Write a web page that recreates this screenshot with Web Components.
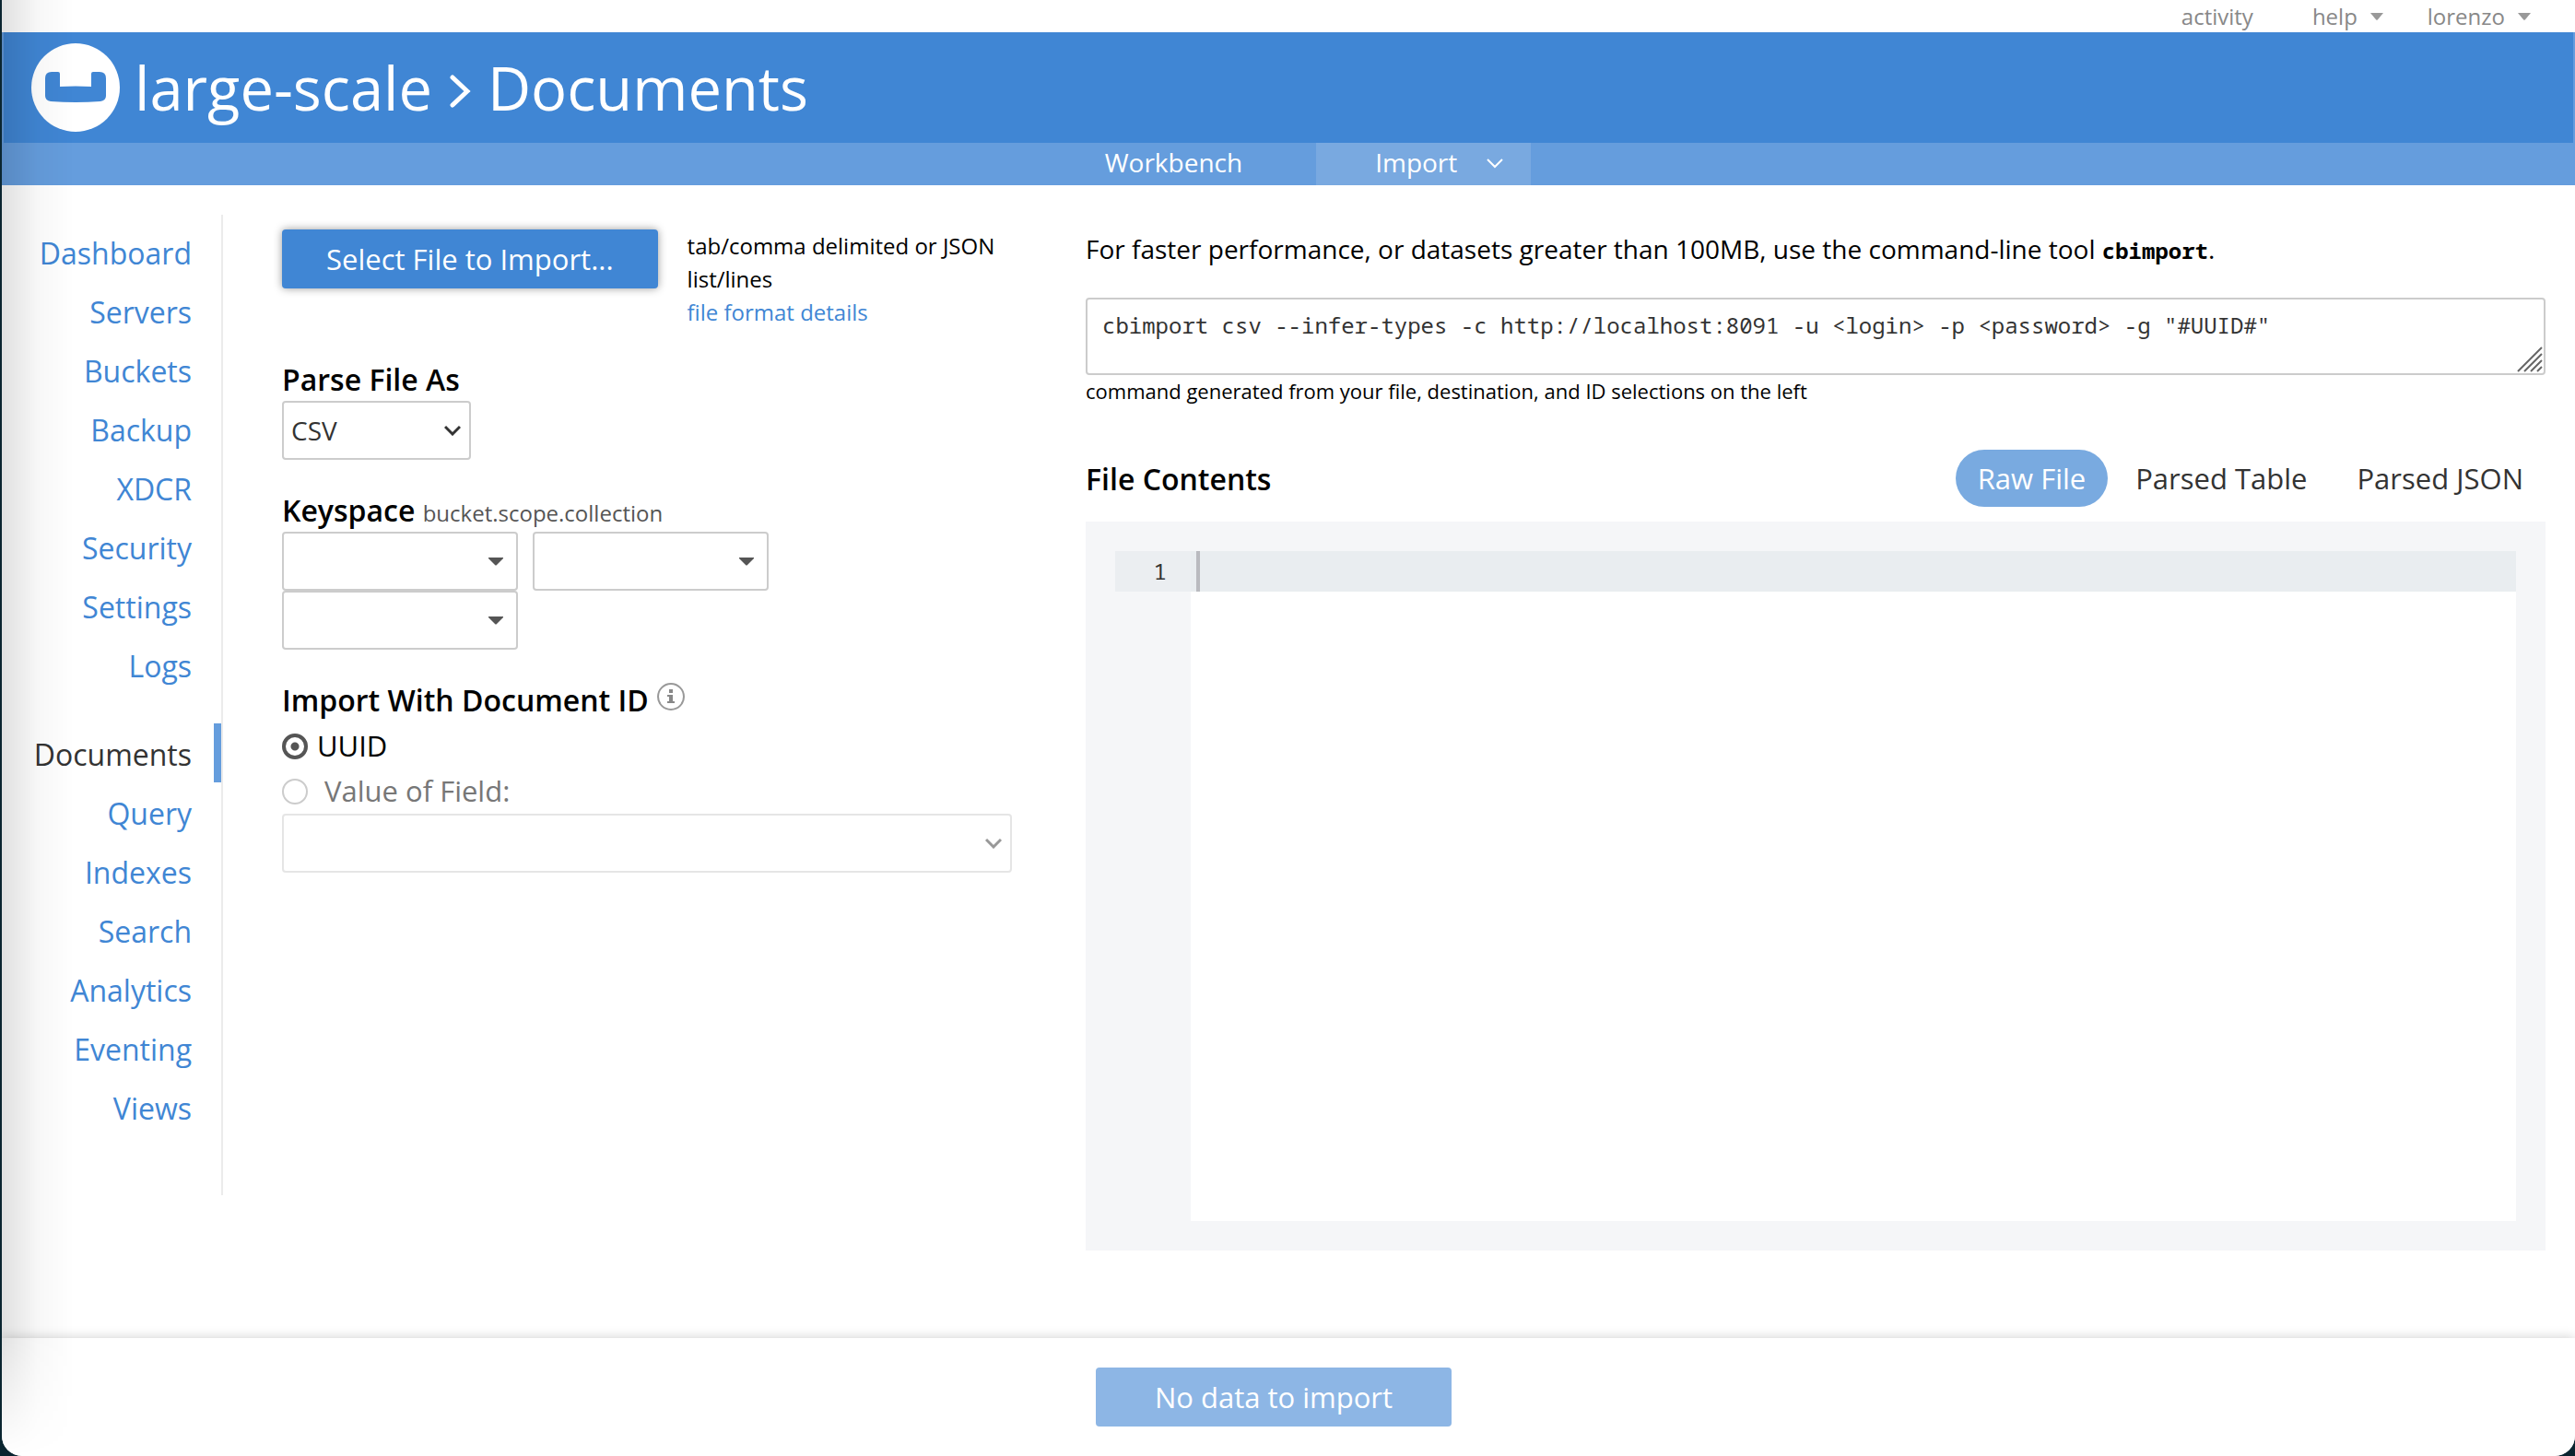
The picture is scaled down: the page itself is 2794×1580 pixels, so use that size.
<!DOCTYPE html>
<html lang="en">
<head>
<meta charset="utf-8">
<title>large-scale &gt; Documents</title>
<style>
html { height: 100%; background: #0a2530; }
body { margin: 0; min-height: 100%; display: flex; font-family: "Open Sans", "Noto Sans", sans-serif; font-size: 32px; color: #000; --mono: "Noto Sans Mono", "DejaVu Sans Mono", monospace; }
</style>
</head>
<body>
<cb-app></cb-app>
<script>
const define = (name, html, setup) => customElements.define(name, class extends HTMLElement {
  constructor() {
    super();
    this.attachShadow({ mode: "open" }).innerHTML = html;
  }
  connectedCallback() { if (setup) setup(this, this.shadowRoot); }
});

define("cb-topbar", `
<style>
:host { display: block; }
nav { display: flex; justify-content: flex-end; align-items: center; gap: 48px; height: 35px; padding-right: 48px; font-size: 24px; line-height: 34px; }
a { color: #888; text-decoration: none; display: flex; align-items: center; gap: 14px; }
a:first-child { margin-right: 16px; }
svg { width: 14px; height: 8px; fill: #999; }
</style>
<nav aria-label="Account">
<a href="#activity">activity</a>
<a href="#help">help<svg viewBox="0 0 14 8"><path d="M0 0h14L8 7.300Q7 8.300 6 7.300z"/></svg></a>
<a href="#user">lorenzo<svg viewBox="0 0 14 8"><path d="M0 0h14L8 7.300Q7 8.300 6 7.300z"/></svg></a>
</nav>`);

define("cb-header", `
<style>
:host { display: block; color: #fff; }
header { display: flex; align-items: center; gap: 16px; height: 120px; padding-left: 30px; background: #4086d4; border: solid #659ddd; border-width: 0 2px; }
.logo { width: 96px; height: 96px; display: block; }
h1 { margin: 0; font-size: 65px; font-weight: 400; line-height: 88px; display: flex; align-items: center; gap: 18px; }
h1 svg { width: 24px; height: 40px; margin-top: 8px; }
nav { display: flex; justify-content: center; gap: 16px; height: 46px; background: #659ddd; font-size: 28px; line-height: 42px; }
a { color: #fff; text-decoration: none; padding: 0 64px; display: flex; }
a.on { background: #79a9e0; padding-right: 30px; gap: 32px; }
a.on svg { width: 18px; height: 12px; margin-top: 16px; }
</style>
<header>
<svg class="logo" viewBox="0 0 96 96"><circle cx="48" cy="48" r="48" fill="#fff"/><path fill="#4086d4" d="M15 38Q15 31 22 31H29Q31 31 31 33V47Q48 46 65 47V33Q65 31 67 31H74Q81 31 81 38V57Q81 62 75 63Q48 65 21 63Q15 62 15 57z"/></svg>
<h1><span>large-scale</span><svg viewBox="0 0 24 40" fill="none" stroke="#fff" stroke-width="5" stroke-linecap="round"><path d="M4 5 20 20 4 35"/></svg><span>Documents</span></h1>
</header>
<nav aria-label="Documents">
<a href="#workbench">Workbench</a>
<a class="on" href="#import">Import<svg viewBox="0 0 18 12" fill="none" stroke="#fff" stroke-width="2"><path d="M1 2 9 10 17 2"/></svg></a>
</nav>`);

define("cb-sidebar", `
<style>
:host { display: block; width: 240px; border-right: 2px solid #ebebeb; box-sizing: border-box; }
nav { padding: 8px 0 64px; display: flex; flex-direction: column; }
a { color: #4086d4; text-decoration: none; line-height: 60px; text-align: right; padding: 4px 24px 0 0; border-right: 8px solid transparent; }
a.on { color: #333; border-right-color: #659ddd; margin-top: 32px; }
</style>
<nav aria-label="Main"></nav>`, (el, root) => {
  const nav = root.querySelector("nav");
  for (const name of el.getAttribute("items").split(" ")) {
    const a = document.createElement("a");
    a.href = "#" + name.toLowerCase();
    a.textContent = name;
    if (name === el.getAttribute("active")) { a.className = "on"; a.setAttribute("aria-current", "page"); }
    nav.append(a);
  }
});

define("cb-select", `
<style>
:host { display: block; width: 256px; }
.box { display: grid; align-items: center; }
.box > * { grid-area: 1 / 1; }
select { appearance: none; width: 100%; height: 64px; margin: 0; padding: 0 8px; box-sizing: border-box; border: 2px solid #ccc; border-radius: 4px; background: #fff; font: 28px "Open Sans", sans-serif; color: #333; opacity: 1; }
svg { justify-self: end; margin-right: 11px; width: 18px; height: 12px; pointer-events: none; }
.fill { display: none; margin-right: 15px; }
:host([kind=menu]) .fill { display: block; }
:host([kind=menu]) .line { display: none; }
:host([disabled]) .box { opacity: .5; }
</style>
<div class="box"><select></select>
<svg class="line" viewBox="0 0 18 12" fill="none" stroke="#333" stroke-width="3"><path d="M1 2 9 10 17 2"/></svg>
<svg class="fill" viewBox="0 0 18 12" fill="#555"><path d="M1 2H17V3L10 10Q9 11 8 10L1 3z"/></svg></div>`, (el, root) => {
  const s = root.querySelector("select");
  s.setAttribute("aria-label", el.getAttribute("label"));
  s.disabled = el.hasAttribute("disabled");
  s.add(new Option(el.getAttribute("value") || ""));
});

define("cb-import-form", `
<style>
:host { display: block; }
.file { display: flex; gap: 32px; align-items: flex-start; }
button { height: 64px; margin-top: 16px; padding: 0 48px; border: 0; border-radius: 4px; background: #4086d4; color: #fff; font: inherit; font-size: 31px; box-shadow: 0 0 10px rgba(0,0,0,.4); white-space: nowrap; }
.file p { margin: 16px 0 0; font-size: 24px; line-height: 36px; width: 360px; }
a { color: #4086d4; text-decoration: none; }
h2 { margin: 0; font-size: 32px; font-weight: 600; line-height: 46px; }
h2 small { font-size: 24px; line-height: 24px; font-weight: 400; color: #555; }
section { margin-top: 32px; }
.parse { width: 205px; }
.keys { display: flex; flex-wrap: wrap; column-gap: 16px; width: 600px; }
h2 svg { width: 32px; height: 32px; margin-left: 8px; }
.ids { margin-top: 2px; font-size: 31px; }
label { display: flex; align-items: center; line-height: 49px; gap: 10px; }
label.off { color: #777; gap: 18px; }
input { appearance: none; margin: 0; width: 28px; height: 28px; box-sizing: border-box; border: 4px solid #555; border-radius: 50%; background: radial-gradient(circle, #555 4px, #fff 5px); }
.off input { border: 2px solid #ccc; background: #fff; }
.field { width: 100%; }
</style>
<div class="file"><button type="button">Select File to Import...</button>
<p>tab/comma delimited or JSON list/lines<br><a href="#formats">file format details</a></p></div>
<section><h2>Parse File As</h2><cb-select class="parse" label="Parse File As" value="CSV"></cb-select></section>
<section><h2>Keyspace <small>bucket.scope.collection</small></h2>
<div class="keys"><cb-select kind="menu" label="Bucket"></cb-select><cb-select kind="menu" label="Scope"></cb-select><cb-select kind="menu" label="Collection"></cb-select></div></section>
<section><h2>Import With Document ID<svg viewBox="0 0 32 32"><circle cx="16" cy="16" r="14" fill="none" stroke="#999" stroke-width="2"/><path fill="#888" d="M14 8h4v4h-4zM12 14h6v7h2v2h-8v-2h2v-5h-2z"/></svg></h2>
<div class="ids"><label><input type="radio" name="id" checked>UUID</label>
<label class="off"><input type="radio" name="id" disabled>Value of Field:</label></div>
<cb-select class="field" label="Field" disabled></cb-select></section>`);

define("cb-command", `
<style>
:host { display: block; }
p { margin: 0; font-size: 28px; line-height: 46px; }
b { font: bold 24px/24px var(--mono); }
textarea { display: block; width: 100%; height: 84px; box-sizing: border-box; margin: 0; padding: 10px 16px; border: 2px solid #ccc; border-radius: 4px; font: 24px/36px var(--mono); color: #333; resize: none; overflow: hidden; }
.area { display: grid; margin-top: 30px; }
.area > * { grid-area: 1 / 1; }
svg { place-self: end; width: 28px; height: 28px; margin: 0 3px 3px 0; }
small { display: block; font-size: 22px; line-height: 34px; }
</style>
<p><label for="cmd">For faster performance, or datasets greater than 100MB, use the command-line tool <b>cbimport</b>.</label></p>
<div class="area"><textarea id="cmd" readonly></textarea>
<svg viewBox="0 0 28 28" stroke="#666" stroke-width="2"><path d="M1 27 27 1M8 27 27 8M15 27 27 15M22 27 27 22"/></svg></div>
<small>command generated from your file, destination, and ID selections on the left</small>`, (el, root) => {
  root.querySelector("textarea").value = 'cbimport csv --infer-types -c http://localhost:8091 -u <login> -p <password> -g "#UUID#"';
});

define("cb-file-view", `
<style>
:host { display: flex; flex-direction: column; }
.head { display: flex; justify-content: space-between; align-items: center; height: 62px; }
h2 { margin: 0; font-size: 32px; font-weight: 600; }
.tabs { display: flex; gap: 6px; }
button { height: 62px; border: 0; border-radius: 31px; background: none; padding: 0 24px; font: inherit; font-size: 31px; color: #333; }
button[aria-selected=true] { background: #79aae0; color: #fff; }
.panel { flex: 1; margin-top: 16px; padding: 32px; background: #f5f6f8; display: flex; }
.gutter { width: 82px; font: 24px/44px var(--mono); color: #333; }
.gutter div { background: #ebeef1; text-align: right; padding-right: 26px; }
.code { flex: 1; background: #fff; }
.row { height: 44px; background: #e9edf0; padding-left: 6px; }
.row i { display: block; width: 4px; height: 44px; background: #b9babf; }
</style>
<div class="head"><h2>File Contents</h2>
<div class="tabs" role="tablist"><button role="tab" aria-selected="true">Raw File</button><button role="tab">Parsed Table</button><button role="tab">Parsed JSON</button></div></div>
<div class="panel"><div class="gutter"><div>1</div></div><div class="code"><div class="row"><i></i></div></div></div>`);

define("cb-footer", `
<style>
:host { display: flex; justify-content: center; padding: 32px 32px 32px 0; background: #fff; box-shadow: 0 0 12px rgba(0,0,0,.2); }
button { height: 64px; padding: 0 64px; border: 0; border-radius: 4px; background: #8db6e5; color: #fff; font: inherit; font-size: 31px; }
</style>
<button type="button" disabled>No data to import</button>`);

define("cb-app", `
<style>
:host { flex: 1; display: flex; flex-direction: column; position: relative; margin-left: 2px; background: #fff; border-radius: 0 0 22px 22px; overflow: hidden; }
:host::after { content: ""; position: absolute; left: 0; top: 0; bottom: 0; width: 78px; pointer-events: none; background: linear-gradient(to right, rgba(0,0,0,.12), rgba(0,0,0,.03) 50%, transparent); -webkit-mask: linear-gradient(to top, transparent, #000 130px); mask: linear-gradient(to top, transparent, #000 130px); }
main { flex: 1; display: flex; padding: 32px 32px 95px 0; }
cb-sidebar { align-self: flex-start; }
cb-import-form { width: 792px; margin-left: 64px; }
.right { flex: 1; margin-left: 80px; padding-top: 14px; display: flex; flex-direction: column; }
cb-file-view { flex: 1; margin-top: 47px; }
</style>
<cb-topbar></cb-topbar>
<cb-header></cb-header>
<main>
<cb-sidebar active="Documents" items="Dashboard Servers Buckets Backup XDCR Security Settings Logs Documents Query Indexes Search Analytics Eventing Views"></cb-sidebar>
<cb-import-form></cb-import-form>
<div class="right"><cb-command></cb-command><cb-file-view></cb-file-view></div>
</main>
<cb-footer></cb-footer>`);
</script>
</body>
</html>
